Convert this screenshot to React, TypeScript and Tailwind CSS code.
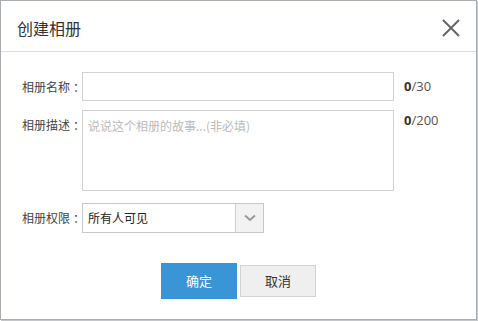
import React from 'react';

const font = { fontFamily: '"Microsoft YaHei", "Noto Sans CJK SC", "Noto Sans", sans-serif' };

function Label({ text, className = '' }: { text: string; className?: string }) {
  return (
    <span className={`w-[60px] text-[12px] text-[#444] whitespace-nowrap ${className}`}>
      {text}
      <span className="ml-[3px]">：</span>
    </span>
  );
}

export default function App() {
  return (
    <div className="w-[478px] h-[321px] bg-white" style={font}>
      <div className="w-[477px] h-[320px] border border-[#a9adb1] shadow-[1px_1px_0_#c4c7ca] bg-white flex flex-col">
        <div className="h-[51px] border-b border-[#dedede] flex items-center justify-between pl-[16px] pr-[16px] shrink-0">
          <span className="text-[16px] text-[#333] pt-[3px]">创建相册</span>
          <svg width="18" height="18" viewBox="0 0 18 18" className="mt-[3px]">
            <path d="M1 1 L17 17 M17 1 L1 17" stroke="#666" strokeWidth="2" fill="none" />
          </svg>
        </div>

        <div className="flex flex-col pl-[21px] pt-[20px]">
          <div className="flex items-center h-[29px]">
            <Label text="相册名称" />
            <div className="w-[312px] h-[29px] border border-[#d2d2d2] bg-white" />
            <span className="ml-[10px] text-[13px] text-[#555]" style={{ fontFamily: '"Open Sans", sans-serif' }}>
              <b className="text-[#333]">0</b>/30
            </span>
          </div>

          <div className="flex items-start mt-[9px]">
            <Label text="相册描述" className="pt-[6px]" />
            <div className="w-[312px] h-[81px] border border-[#d2d2d2] bg-white px-[5px] pt-[6px] text-[12px] text-[#bbb]">
              说说这个相册的故事...(非必填)
            </div>
            <span className="ml-[10px] text-[13px] text-[#555] pt-[1px]" style={{ fontFamily: '"Open Sans", sans-serif' }}>
              <b className="text-[#333]">0</b>/200
            </span>
          </div>

          <div className="flex items-center mt-[12px]">
            <Label text="相册权限" />
            <div className="w-[182px] h-[30px] border border-[#c8c8c8] bg-white flex">
              <div className="flex-1 flex items-center pl-[5px] text-[12px] text-[#222]">所有人可见</div>
              <div className="w-[28px] h-full border-l border-[#cfcfcf] bg-[#f2f2f2] flex items-center justify-center">
                <svg width="12" height="8" viewBox="0 0 12 8">
                  <path d="M1 1.5 L6 6 L11 1.5" stroke="#999" strokeWidth="2" fill="none" />
                </svg>
              </div>
            </div>
          </div>

          <div className="flex items-center mt-[30px] ml-[139px] gap-[3px]">
            <div className="w-[76px] h-[36px] bg-[#3a95d7] text-white text-[13px] flex items-center justify-center">确定</div>
            <div className="w-[76px] h-[32px] bg-[#efefef] border border-[#d3d3d3] text-[#333] text-[13px] flex items-center justify-center">取消</div>
          </div>
        </div>
      </div>
    </div>
  );
}
